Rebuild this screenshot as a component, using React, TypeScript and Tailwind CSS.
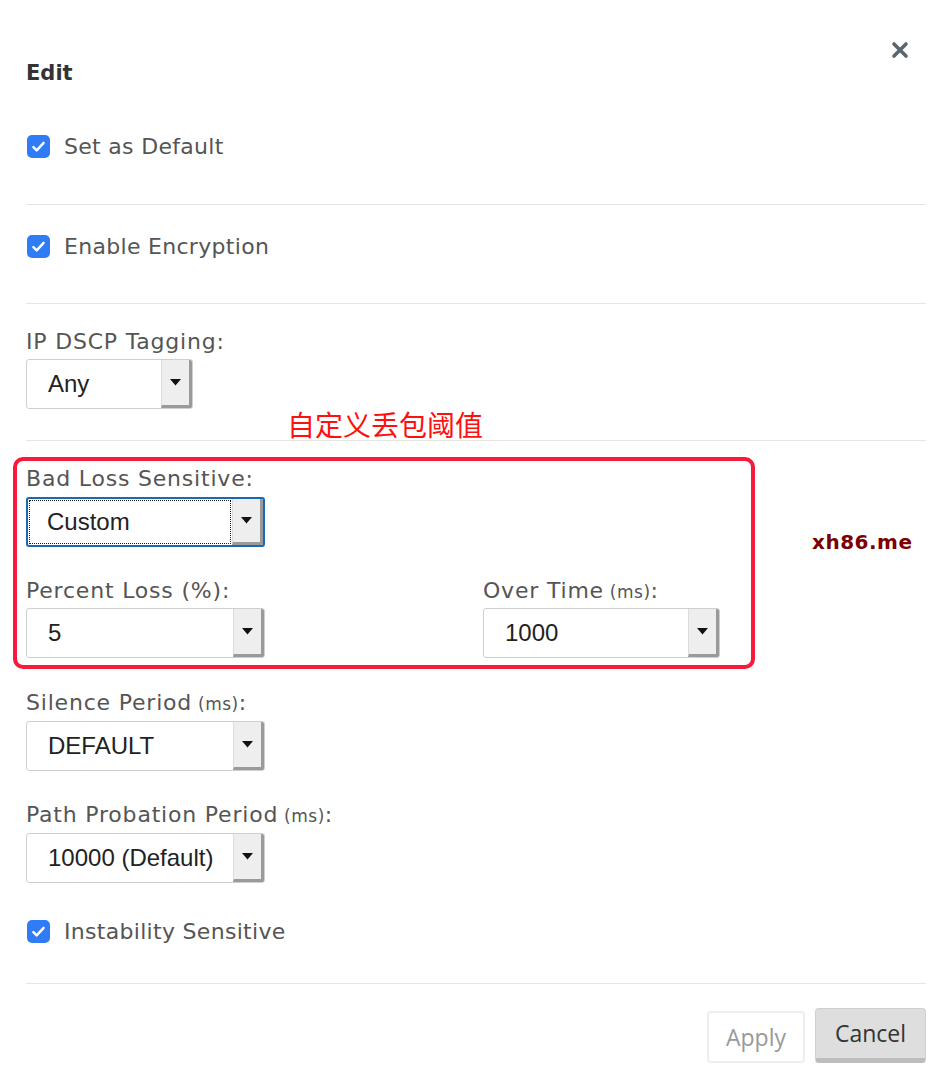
import { useState } from 'react';

const sans = { fontFamily: '"Open Sans", "Noto Sans", sans-serif' };
const labelFont = { fontFamily: '"DejaVu Sans", "Open Sans", sans-serif' };

function Check({ label }: { label: string }) {
  return (
    <label className="flex items-center h-[30px] gap-[14px] cursor-pointer">
      <span className="ml-[1px] w-[23px] h-[23px] rounded-[5px] bg-[#2f7cf6] flex items-center justify-center">
        <svg width="17" height="17" viewBox="0 0 16 16" fill="none">
          <path d="M3.2 8.6l3.1 3.1L12.8 4.6" stroke="#fff" strokeWidth="2.3" strokeLinecap="round" strokeLinejoin="round" />
        </svg>
      </span>
      <span className="text-[22px] tracking-[0.3px] text-[#555]" style={labelFont}>
        {label}
      </span>
    </label>
  );
}

function Label({ text, unit }: { text: string; unit?: string }) {
  return (
    <div className="h-[30px] leading-[33px] text-[22px] tracking-[0.8px] text-[#555]" style={labelFont}>
      {text}
      {unit && <span className="text-[17px] tracking-[0.5px]"> ({unit})</span>}:
    </div>
  );
}

function Select({ value, width, focused }: { value: string; width: string; focused?: boolean }) {
  return (
    <div
      className={`flex h-[50px] rounded-[3px] bg-white overflow-hidden ${width} ${
        focused ? 'border-2 border-[#1769b8]' : 'border border-[#cfcfcf]'
      }`}
    >
      <div
        className={`flex-1 flex items-center text-[24px] text-[#222] ${
          focused ? 'm-[1px] pl-[17px] border border-dotted border-[#222]' : 'pl-[21px]'
        }`}
        style={{ fontFamily: '"Liberation Sans", Arial, sans-serif' }}
      >
        {value}
      </div>
      <div className="w-[31px] bg-[#eeeeee] border-l border-[#dcdcdc] border-r-[3px] border-r-[#9a9a9a] border-b-[3px] border-b-[#9a9a9a] flex items-center justify-center">
        <svg width="11" height="7" viewBox="0 0 11 7">
          <path d="M0 0h11L5.5 6.5z" fill="#111" />
        </svg>
      </div>
    </div>
  );
}

export default function App() {
  const [open] = useState(true);
  if (!open) return null;

  return (
    <div className="relative w-[940px] min-h-[1092px] bg-white pl-[26px] pr-[14px] pt-[40px]" style={sans}>
      <div className="flex justify-between items-start">
        <h2 className="mt-[18px] h-[30px] leading-[30px] text-[21px] font-bold text-[#333]" style={labelFont}>
          Edit
        </h2>
        <button className="w-[20px] h-[20px] mr-[16px] flex items-center justify-center text-[#5b6670]">
          <svg width="18" height="18" viewBox="0 0 18 18">
            <path d="M3 3l12 12M15 3L3 15" stroke="currentColor" strokeWidth="3.6" strokeLinecap="round" />
          </svg>
        </button>
      </div>

      <div className="mt-[43px]">
        <Check label="Set as Default" />
      </div>
      <div className="mt-[43px] border-t border-[#e6e6e1]" />

      <div className="mt-[26px]">
        <Check label="Enable Encryption" />
      </div>
      <div className="mt-[42px] border-t border-[#e6e6e1]" />

      <div className="mt-[21px]">
        <Label text="IP DSCP Tagging" />
        <div className="mt-[4px]">
          <Select value="Any" width="w-[167px]" />
        </div>
      </div>
      <div
        className="ml-[261px] h-[31px] leading-[31px] text-[28px] text-[#ff1010]"
        style={{ fontFamily: '"Noto Sans CJK SC", sans-serif' }}
      >
        自定义丢包阈值
      </div>
      <div className="border-t border-[#e6e6e1]" />

      <div className="mt-[16px] -ml-[13px] w-[742px] h-[212px] border-4 border-[#f81a3a] rounded-[10px] pl-[9px] pt-[1px]">
        <Label text="Bad Loss Sensitive" />
        <div className="mt-[5px]">
          <Select value="Custom" width="w-[239px]" focused />
        </div>
        <div className="flex mt-[27px]">
          <div className="w-[457px]">
            <Label text="Percent Loss (%)" />
            <div className="mt-[4px]">
              <Select value="5" width="w-[239px]" />
            </div>
          </div>
          <div>
            <Label text="Over Time" unit="ms" />
            <div className="mt-[4px]">
              <Select value="1000" width="w-[237px]" />
            </div>
          </div>
        </div>
      </div>

      <div className="mt-[17px]">
        <Label text="Silence Period" unit="ms" />
        <div className="mt-[5px]">
          <Select value="DEFAULT" width="w-[239px]" />
        </div>
      </div>

      <div className="mt-[27px]">
        <Label text="Path Probation Period" unit="ms" />
        <div className="mt-[5px]">
          <Select value="10000 (Default)" width="w-[239px]" />
        </div>
      </div>

      <div className="mt-[33px]">
        <Check label="Instability Sensitive" />
      </div>
      <div className="mt-[37px] border-t border-[#e6e6e1]" />

      <div className="mt-[24px] flex justify-end items-end gap-[10px]">
        <button className="w-[98px] h-[52px] border-2 border-[#eeeeee] rounded-[4px] text-[23px] text-[#999]">
          Apply
        </button>
        <button className="w-[111px] h-[55px] bg-[#dedede] border border-[#cfcfcf] border-b-[5px] border-b-[#bdbdbd] rounded-[4px] text-[23px] text-[#333]">
          Cancel
        </button>
      </div>

      <div
        className="absolute left-[812px] top-[527px] text-[20px] font-bold text-[#7c0000] tracking-[0.5px]"
        style={{ fontFamily: '"DejaVu Sans", sans-serif' }}
      >
        xh86.me
      </div>
    </div>
  );
}
